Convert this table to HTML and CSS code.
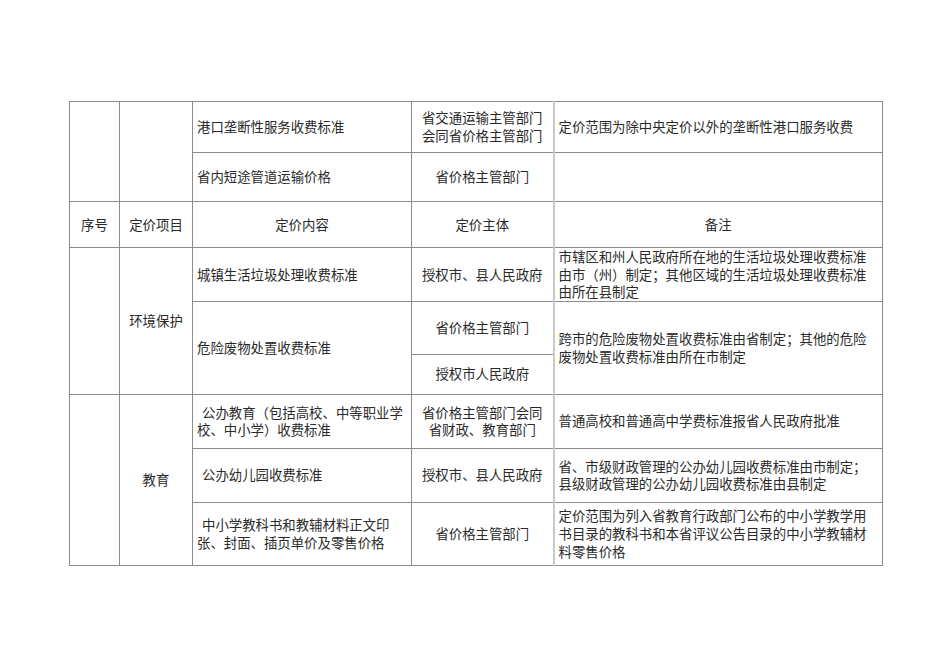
FILE: index.html
```html
<!DOCTYPE html>
<html lang="zh-CN">
<head>
<meta charset="utf-8">
<title>定价目录</title>
<link rel="stylesheet" href="styles.css">
</head>
<body>
<table class="price">
  <colgroup>
    <col class="c-no">
    <col class="c-item">
    <col class="c-content">
    <col class="c-subject">
    <col class="c-remark">
  </colgroup>
  <tbody>
    <tr class="h51">
      <td rowspan="2"></td>
      <td rowspan="2"></td>
      <td class="left">港口垄断性服务收费标准</td>
      <td class="center">省交通运输主管部门<br>会同省价格主管部门</td>
      <td class="rk">定价范围为除中央定价以外的垄断性港口服务收费</td>
    </tr>
    <tr class="h49">
      <td class="left">省内短途管道运输价格</td>
      <td class="center">省价格主管部门</td>
      <td class="rk"></td>
    </tr>
    <tr class="h46">
      <td class="center">序号</td>
      <td class="center">定价项目</td>
      <td class="center">定价内容</td>
      <td class="center">定价主体</td>
      <td class="rk center">备注</td>
    </tr>
    <tr class="h53">
      <td rowspan="3"></td>
      <td rowspan="3" class="center">环境保护</td>
      <td class="left">城镇生活垃圾处理收费标准</td>
      <td class="center">授权市、县人民政府</td>
      <td class="rk">市辖区和州人民政府所在地的生活垃圾处理收费标准<br>由市（州）制定；其他区域的生活垃圾处理收费标准<br>由所在县制定</td>
    </tr>
    <tr class="h53">
      <td rowspan="2" class="left">危险废物处置收费标准</td>
      <td class="center">省价格主管部门</td>
      <td rowspan="2" class="rk">跨市的危险废物处置收费标准由省制定；其他的危险<br>废物处置收费标准由所在市制定</td>
    </tr>
    <tr class="h40">
      <td class="center">授权市人民政府</td>
    </tr>
    <tr class="h54">
      <td rowspan="3"></td>
      <td rowspan="3" class="center">教育</td>
      <td class="left"><span class="ind">公办教育（包括高校、中等职业学</span><br>校、中小学）收费标准</td>
      <td class="center">省价格主管部门会同<br>省财政、教育部门</td>
      <td class="rk">普通高校和普通高中学费标准报省人民政府批准</td>
    </tr>
    <tr class="h54">
      <td class="left"><span class="ind">公办幼儿园收费标准</span></td>
      <td class="center">授权市、县人民政府</td>
      <td class="rk">省、市级财政管理的公办幼儿园收费标准由市制定；<br>县级财政管理的公办幼儿园收费标准由县制定</td>
    </tr>
    <tr class="h63">
      <td class="left"><span class="ind">中小学教科书和教辅材料正文印</span><br>张、封面、插页单价及零售价格</td>
      <td class="center">省价格主管部门</td>
      <td class="rk">定价范围为列入省教育行政部门公布的中小学教学用<br>书目录的教科书和本省评议公告目录的中小学教辅材<br>料零售价格</td>
    </tr>
  </tbody>
</table>
</body>
</html>
```

FILE: styles.css
```css
html, body {
  margin: 0;
  padding: 0;
  background: #ffffff;
}

body {
  padding: 101px 0 0 69px;
  font-family: "Noto Sans CJK SC", "Noto Sans", sans-serif;
  font-size: 13.4px;
  line-height: 17.6px;
  color: #2a2a2a;
}

.price {
  border-collapse: collapse;
  table-layout: fixed;
  width: 813px;
}

.c-no { width: 50px; }
.c-item { width: 73px; }
.c-content { width: 219px; }
.c-subject { width: 142px; }
.c-remark { width: 329px; }

.price td {
  border: 1px solid #8c8c8c;
  padding: 0 4px;
  vertical-align: middle;
  white-space: nowrap;
  overflow: hidden;
}

.price td.rk {
  border-left: 2px solid #c9c9c9;
  padding-left: 4px;
  text-align: left;
}

.left { text-align: left; }
.center { text-align: center; }
.price td.rk.center { text-align: center; }

.ind { padding-left: 5px; }

.h51 { height: 51px; }
.h49 { height: 49px; }
.h46 { height: 46px; }
.h53 { height: 53px; }
.h40 { height: 40px; }
.h54 { height: 54px; }
.h63 { height: 63px; }
```
